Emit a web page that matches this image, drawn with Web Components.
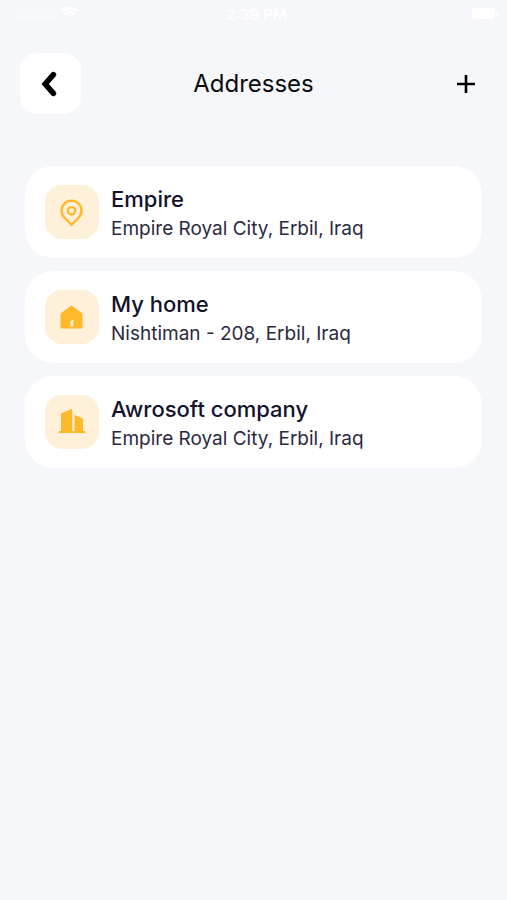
<!DOCTYPE html>
<html lang="en">
<head>
  <meta charset="utf-8">
  <meta name="viewport" content="width=device-width, initial-scale=1">
  <title>Addresses</title>
  <style>
    body {
      margin: 0;
      min-height: 100vh;
      background: #f5f7fb;
      color: #15122c;
      font-family: Inter, "Liberation Sans", sans-serif;
    }
  </style>
</head>
<body>
  <address-screen>
    <status-bar slot="status" time="2:39 PM"></status-bar>
    <nav-header slot="header">Addresses</nav-header>
    <address-card icon="pin">
      Empire
      <span slot="location">Empire Royal City, Erbil, Iraq</span>
    </address-card>
    <address-card icon="home">
      My home
      <span slot="location">Nishtiman - 208, Erbil, Iraq</span>
    </address-card>
    <address-card icon="office">
      Awrosoft company
      <span slot="location">Empire Royal City, Erbil, Iraq</span>
    </address-card>
  </address-screen>

  <script>
    (function() {
      // Icons for the address types
      const icons = {
        pin: `
          <svg viewBox="0 0 28 28" fill="none" stroke="#ffb829" stroke-width="2.3" stroke-linejoin="round">
            <path d="M13.5 27 L6.5 19.8 A10 10 0 1 1 20.5 19.8 Z"/>
            <circle cx="13.5" cy="12.8" r="3.7"/>
          </svg>`,
        home: `
          <svg viewBox="0 0 28 28">
            <path d="M13.5 2.5 L23.5 9.8 Q24.5 10.5 24.5 12 V25.5 H2.5 V12 Q2.5 10.5 3.5 9.8 Z" fill="#ffb829"/>
            <path d="M12.5 18 L15.3 16.5 V23.5 H12.5 Z" fill="#fff0d6"/>
          </svg>`,
        office: `
          <svg viewBox="0 0 28 28" fill="#ffb829">
            <path d="M3 23 V6.8 Q3 5.6 4 5 L13 1.2 Q14.2 .8 14.2 2 V23 H16.5 V7 L24 10 Q25 10.5 25 11.6 V23 H27.5 V25 H.5 V23 Z"/>
          </svg>`
      }

      // --- Screen layout

      const screenTemplate = document.createElement('template')
      screenTemplate.innerHTML = `
        <style>
          :host {
            display: block;
          }

          main {
            display: flex;
            flex-direction: column;
            gap: 13px;
            padding: 52px 25px 24px;
          }
        </style>
        <slot name="status"></slot>
        <slot name="header"></slot>
        <main><slot></slot></main>
      `

      class AddressScreen extends HTMLElement {
        constructor() {
          super()
          this.attachShadow({ mode: 'open' })
          this.shadowRoot.appendChild(screenTemplate.content.cloneNode(true))
        }
      }

      // --- Status bar, white on the page background

      const statusTemplate = document.createElement('template')
      statusTemplate.innerHTML = `
        <style>
          :host {
            display: grid;
            grid-template-columns: 1fr auto 1fr;
            align-items: center;
            height: 28px;
            padding: 0 9px 0 15px;
            color: #fff;
            font-size: 15px;
            font-weight: 500;
          }

          .signal {
            display: flex;
            align-items: center;
            gap: 6px;
          }

          .carrier {
            width: 40px;
            height: 10px;
            border-radius: 3px;
            background: #f7f9fc;
          }

          .battery {
            justify-self: end;
          }

          svg {
            display: block;
          }
        </style>
        <div class="signal">
          <div class="carrier"></div>
          <svg width="18" height="14" viewBox="0 0 18 14" fill="none" stroke="#fff" stroke-width="2.8">
            <path d="M1 3.5 Q9 -1 17 3.5"/>
            <path d="M4 7.5 Q9 3.5 14 7.5"/>
            <path d="M7 8.5 H11 L9 11 Z" fill="#fff" stroke="none"/>
          </svg>
        </div>
        <time></time>
        <svg class="battery" width="26" height="12" viewBox="0 0 26 12" fill="#fff">
          <rect width="23" height="11" rx="3"/>
          <rect x="24" y="3" width="2" height="5" rx="1"/>
        </svg>
      `

      class StatusBar extends HTMLElement {
        constructor() {
          super()
          this.attachShadow({ mode: 'open' })
          this.shadowRoot.appendChild(statusTemplate.content.cloneNode(true))
        }

        connectedCallback() {
          this.shadowRoot.querySelector('time').textContent = this.getAttribute('time')
        }
      }

      // --- Header with the back and add buttons

      const headerTemplate = document.createElement('template')
      headerTemplate.innerHTML = `
        <style>
          :host {
            display: block;
          }

          header {
            display: grid;
            grid-template-columns: 1fr auto 1fr;
            align-items: center;
            padding: 25px 20px 0;
          }

          h1 {
            margin: 0;
            color: #0b0b0d;
            font-size: 24px;
            font-weight: 400;
            line-height: 32px;
          }

          button {
            display: grid;
            place-items: center;
            height: 61px;
            padding: 0;
            border: 0;
            border-radius: 17px;
            background: none;
            cursor: pointer;
          }

          .back {
            width: 61px;
            background: #fff;
          }

          .add {
            justify-self: end;
            width: 43px;
          }
        </style>
        <header>
          <button class="back" type="button" aria-label="Back">
            <svg width="28" height="28" viewBox="0 0 28 28" fill="none" stroke="#000" stroke-width="5.6" stroke-linecap="round" stroke-linejoin="miter">
              <path d="M16.4 4.6 L8.2 14 L16.4 23.4"/>
            </svg>
          </button>
          <h1><slot></slot></h1>
          <button class="add" type="button" aria-label="Add address">
            <svg width="18" height="18" viewBox="0 0 18 18" stroke="#000" stroke-width="2.6">
              <path d="M9 0 V18 M0 9 H18"/>
            </svg>
          </button>
        </header>
      `

      class NavHeader extends HTMLElement {
        constructor() {
          super()
          this.attachShadow({ mode: 'open' })
          this.shadowRoot.appendChild(headerTemplate.content.cloneNode(true))
        }
      }

      // --- Address card

      const cardTemplate = document.createElement('template')
      cardTemplate.innerHTML = `
        <style>
          :host {
            display: block;
          }

          a {
            display: flex;
            align-items: center;
            gap: 12px;
            padding: 16px 20px;
            border-radius: 28px;
            background: #fff;
            color: inherit;
            text-decoration: none;
          }

          .icon {
            display: grid;
            flex: none;
            place-items: center;
            width: 54px;
            height: 54px;
            border-radius: 17px;
            background: #fef0d9;
          }

          .icon svg {
            display: block;
            width: 28px;
            height: 28px;
          }

          h2, p {
            margin: 0;
          }

          h2 {
            font-size: 22px;
            font-weight: 500;
            line-height: 34px;
          }

          p {
            color: #2b2940;
            font-size: 19px;
            line-height: 26px;
          }
        </style>
        <a href="#">
          <div class="icon"></div>
          <div>
            <h2><slot></slot></h2>
            <p><slot name="location"></slot></p>
          </div>
        </a>
      `

      class AddressCard extends HTMLElement {
        constructor() {
          super()
          this.attachShadow({ mode: 'open' })
          this.shadowRoot.appendChild(cardTemplate.content.cloneNode(true))
        }

        connectedCallback() {
          const icon = this.shadowRoot.querySelector('.icon')
          icon.innerHTML = icons[this.getAttribute('icon')] || icons.pin
        }
      }

      // ---
      // Define the elements
      customElements.define('address-screen', AddressScreen)
      customElements.define('status-bar', StatusBar)
      customElements.define('nav-header', NavHeader)
      customElements.define('address-card', AddressCard)
    })()
  </script>
</body>
</html>
